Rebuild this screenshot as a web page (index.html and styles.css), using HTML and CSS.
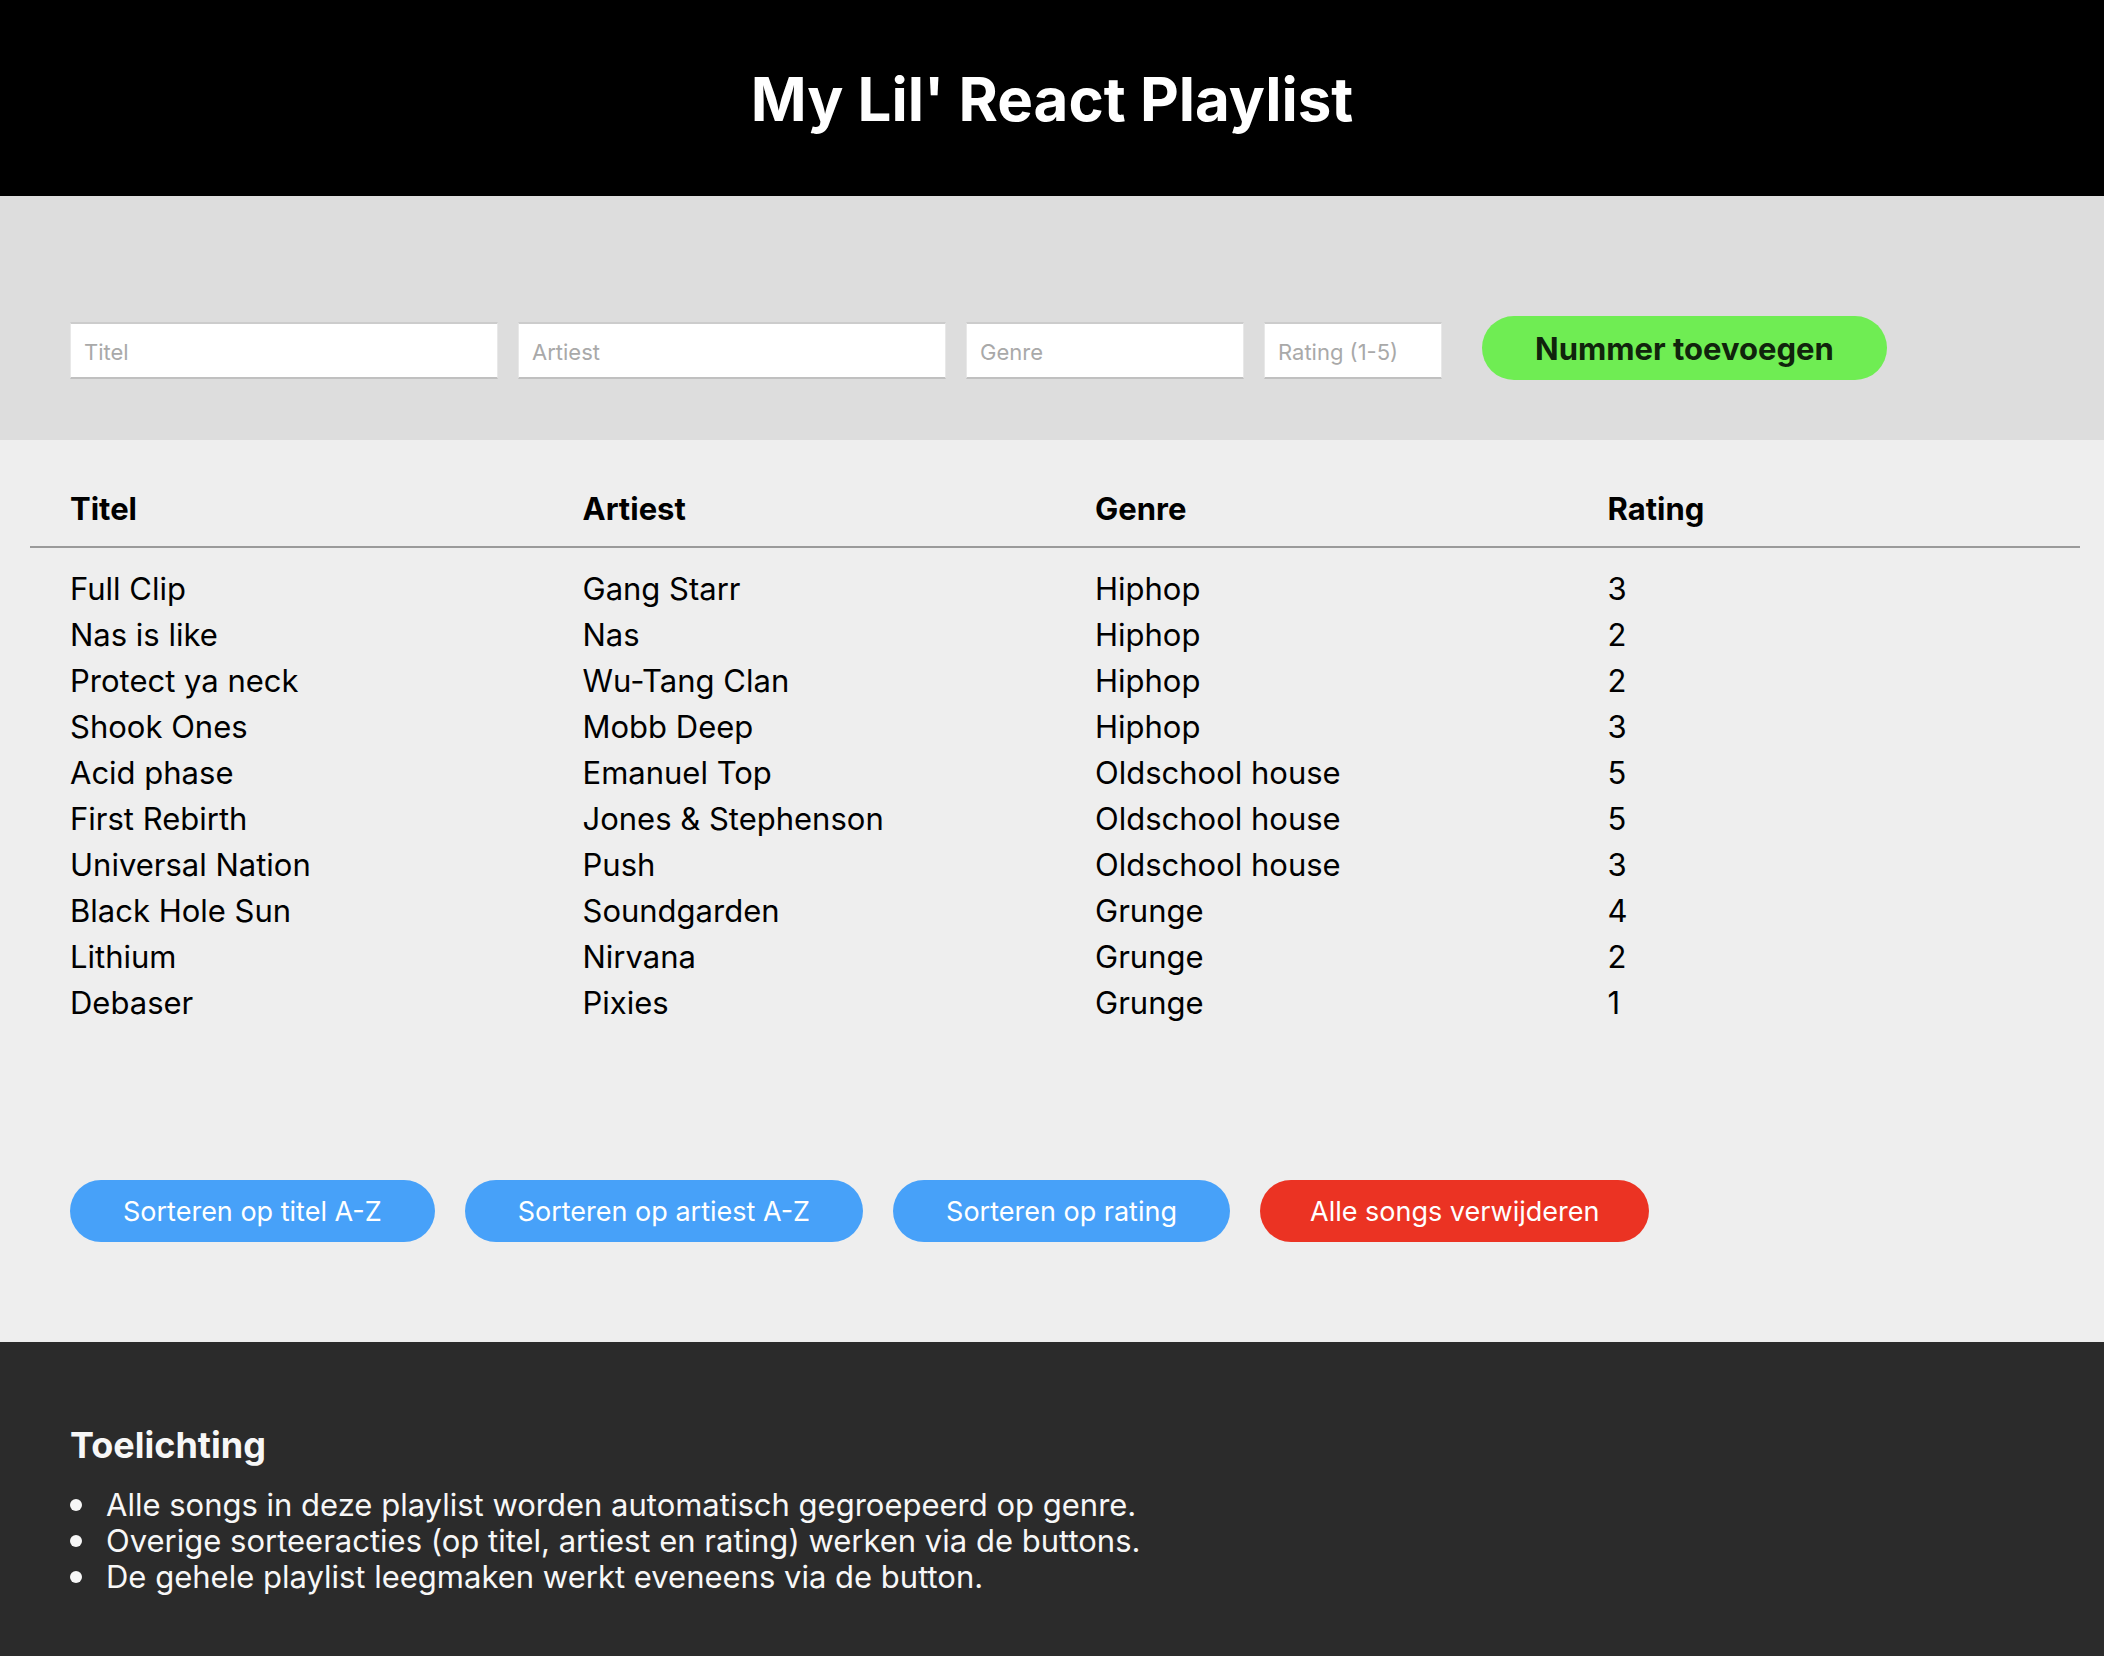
FILE: index.html
```html
<!DOCTYPE html>
<html lang="nl">
<head>
<meta charset="utf-8">
<meta name="viewport" content="width=device-width, initial-scale=1">
<title>My Lil' React Playlist</title>
<link rel="stylesheet" href="styles.css">
</head>
<body>
<header class="header">
  <h1 class="header-title">My Lil' React Playlist</h1>
</header>

<form class="song-form">
  <input class="field field-wide" type="text" name="title" placeholder="Titel" aria-label="Titel">
  <input class="field field-wide" type="text" name="artist" placeholder="Artiest" aria-label="Artiest">
  <input class="field field-genre" type="text" name="genre" placeholder="Genre" aria-label="Genre">
  <input class="field field-rating" type="text" name="rating" placeholder="Rating (1-5)" aria-label="Rating (1-5)">
  <button class="button button-add" type="button">Nummer toevoegen</button>
</form>

<main class="playlist">
  <table class="songs">
    <thead>
      <tr><th scope="col">Titel</th><th scope="col">Artiest</th><th scope="col">Genre</th><th scope="col">Rating</th></tr>
    </thead>
    <tbody>
      <tr><td>Full Clip</td><td>Gang Starr</td><td>Hiphop</td><td>3</td></tr>
      <tr><td>Nas is like</td><td>Nas</td><td>Hiphop</td><td>2</td></tr>
      <tr><td>Protect ya neck</td><td>Wu-Tang Clan</td><td>Hiphop</td><td>2</td></tr>
      <tr><td>Shook Ones</td><td>Mobb Deep</td><td>Hiphop</td><td>3</td></tr>
      <tr><td>Acid phase</td><td>Emanuel Top</td><td>Oldschool house</td><td>5</td></tr>
      <tr><td>First Rebirth</td><td>Jones &amp; Stephenson</td><td>Oldschool house</td><td>5</td></tr>
      <tr><td>Universal Nation</td><td>Push</td><td>Oldschool house</td><td>3</td></tr>
      <tr><td>Black Hole Sun</td><td>Soundgarden</td><td>Grunge</td><td>4</td></tr>
      <tr><td>Lithium</td><td>Nirvana</td><td>Grunge</td><td>2</td></tr>
      <tr><td>Debaser</td><td>Pixies</td><td>Grunge</td><td>1</td></tr>
    </tbody>
  </table>

  <div class="actions">
    <button class="button" type="button">Sorteren op titel A-Z</button>
    <button class="button" type="button">Sorteren op artiest A-Z</button>
    <button class="button" type="button">Sorteren op rating</button>
    <button class="button button-clear" type="button">Alle songs verwijderen</button>
  </div>
</main>

<footer class="notes">
  <h2 class="notes-title">Toelichting</h2>
  <ul class="notes-list">
    <li>Alle songs in deze playlist worden automatisch gegroepeerd op genre.</li>
    <li>Overige sorteeracties (op titel, artiest en rating) werken via de buttons.</li>
    <li>De gehele playlist leegmaken werkt eveneens via de button.</li>
  </ul>
</footer>
</body>
</html>
```

FILE: styles.css
```css
* {
  box-sizing: border-box;
}

body {
  display: flex;
  flex-direction: column;
  min-height: 100vh;
  margin: 0;
  background: #eee;
  color: #000;
  font-family: Inter, "Liberation Sans", sans-serif;
  font-size: 31px;
}

.header {
  padding: 59px 70px 57px;
  background: #000;
  color: #fff;
  text-align: center;
}

.header-title {
  margin: 0;
  font-size: 60px;
  line-height: 80px;
  font-weight: 700;
}

.song-form {
  display: flex;
  align-items: flex-start;
  gap: 20px;
  padding: 120px 70px 60px;
  background: #ddd;
}

.field {
  min-width: 0;
  height: 57px;
  margin: 6px 0 0;
  padding: 2px 13px 0;
  border: 1px solid #e8e8e8;
  border-top: 2px solid #ccc;
  border-bottom: 2px solid #c0c0c0;
  border-radius: 0;
  background: #fff;
  color: #000;
  font-family: inherit;
  font-size: 22px;
}

.field::placeholder {
  color: #a9a9a9;
  opacity: 1;
}

.field-wide {
  width: 428px;
}

.field-genre {
  width: 278px;
}

.field-rating {
  width: 178px;
}

.button {
  padding: 2px 53px 0;
  border: 0;
  border-radius: 32px;
  background: #47a1f9;
  color: #fff;
  font-family: inherit;
  font-size: 27px;
  line-height: 60px;
  white-space: nowrap;
}

.button-add {
  margin-left: 20px;
  background: #6fed53;
  color: #10240c;
  font-size: 31px;
  font-weight: 700;
  line-height: 62px;
}

.button-clear {
  padding: 2px 50px 0;
  background: #eb3323;
}

.playlist {
  padding: 30px 24px 100px 30px;
}

.songs {
  width: 100%;
  border-collapse: separate;
  border-spacing: 0;
  table-layout: fixed;
  line-height: 46px;
  text-align: left;
}

.songs th {
  padding: 16px 0 14px 40px;
  border-bottom: 2px solid #9a9a9a;
  font-weight: 700;
}

.songs td {
  padding: 0 0 0 40px;
}

.songs tbody tr:first-child td {
  padding-top: 18px;
}

.actions {
  display: flex;
  flex-wrap: wrap;
  gap: 30px;
  margin-top: 154px;
  padding: 0 40px;
}

.notes {
  flex: 1;
  padding: 79px 70px 50px;
  background: #2b2b2b;
  color: #f7f7f7;
}

.notes-title {
  margin: 0 0 18px;
  font-size: 36px;
  line-height: 48px;
  font-weight: 700;
}

.notes-list {
  margin: 0;
  padding: 0;
  list-style: none;
  line-height: 36px;
}

.notes-list li {
  display: flex;
  align-items: center;
  gap: 24px;
}

.notes-list li::before {
  content: "";
  flex: none;
  width: 12px;
  height: 12px;
  border-radius: 50%;
  background: currentColor;
}
```
